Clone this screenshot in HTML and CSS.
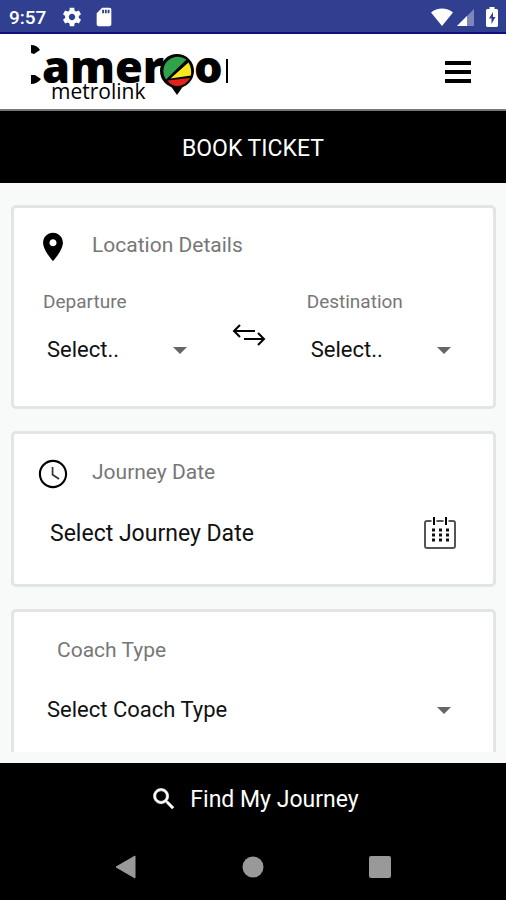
FILE: index.html
```html
<!DOCTYPE html>
<html lang="en">
<head>
    <meta charset="UTF-8">
    <meta name="viewport" content="width=device-width, initial-scale=1.0">
    <title>Book Ticket</title>
    <link rel="stylesheet" href="styles.css">
</head>
<body>
    <div class="app">
        <div class="status-bar">
            <div class="status-group">
                <span class="clock">9:57</span>
                <svg width="22" height="22" viewBox="0 0 24 24" fill="#fff"><path d="M19.43 12.98c.04-.32.07-.64.07-.98s-.03-.66-.07-.98l2.11-1.65c.19-.15.24-.42.12-.64l-2-3.46c-.12-.22-.39-.3-.61-.22l-2.49 1c-.52-.4-1.08-.73-1.69-.98l-.38-2.65C14.46 2.18 14.25 2 14 2h-4c-.25 0-.46.18-.49.42l-.38 2.65c-.61.25-1.17.59-1.69.98l-2.49-1c-.23-.09-.49 0-.61.22l-2 3.46c-.13.22-.07.49.12.64l2.11 1.65c-.04.32-.07.65-.07.98s.03.66.07.98l-2.11 1.65c-.19.15-.24.42-.12.64l2 3.46c.12.22.39.3.61.22l2.49-1c.52.4 1.08.73 1.69.98l.38 2.65c.03.24.24.42.49.42h4c.25 0 .46-.18.49-.42l.38-2.65c.61-.25 1.17-.59 1.69-.98l2.49 1c.23.09.49 0 .61-.22l2-3.46c.12-.22.07-.49-.12-.64l-2.11-1.65zM12 15.500c-1.930 0-3.500-1.570-3.500-3.500s1.570-3.500 3.500-3.500 3.500 1.570 3.500 3.500-1.570 3.500-3.500 3.500z"/></svg>
                <svg width="22" height="22" viewBox="0 0 24 24" fill="#fff"><path d="M18 2h-8L4.020 8 4 20c0 1.100.9 2 2 2h12c1.100 0 2-.9 2-2V4c0-1.100-.9-2-2-2zm-6 6h-2V4h2v4zm3 0h-2V4h2v4zm3 0h-2V4h2v4z"/></svg>
            </div>
            <div class="status-group status-right">
                <svg width="22" height="18" viewBox="0 0 22 18"><path d="M11 18 0 4.500C3 1.800 7 .5 11 .5s8 1.300 11 4z" fill="#fff"/></svg>
                <svg width="17" height="17" viewBox="0 0 17 17"><path d="M17 0v17H0z" fill="#7f86bb"/><path d="M10 7v10H0z" fill="#fff"/></svg>
                <svg class="battery" width="12" height="20" viewBox="0 0 12 20"><path d="M3.500 0h5v2H11l1 1v16l-1 1H1l-1-1V3l1-1h2.500z" fill="#fff"/><path d="M7 5 3 11.500h2.500V17l4-7H7z" fill="#303f8f"/></svg>
            </div>
        </div>

        <header class="header">
            <svg class="logo" width="200" height="64" viewBox="0 0 200 64" role="img" aria-label="Cameroon metrolink">
                <path d="M1 5q6 0 9 5l-6 4-3-1zM1 44v-9l4 0 6 4q-4 5-10 5z"/>
                <text class="logo-name" x="12" y="43">amer</text>
                <text class="logo-name" x="164" y="43">o</text>
                <path d="M197 19v24" stroke="#000" stroke-width="2"/>
                <path d="m140 45 7 10 7-10z"/>
                <circle cx="147" cy="31" r="17"/>
                <path d="M136 39.500a14.500 14.500 0 0 1 20.500-20z" fill="#31a24c"/>
                <path d="M140.500 38.500 158.500 22.500q3.500 6 2.500 13z" fill="#f8e71c"/>
                <path d="M137.500 40.500l22.500-2.500q-4 7.500-12 8-7 0-10.500-5.500z" fill="#e2231a"/>
                <text class="logo-sub" x="21" y="59">metrolink</text>
            </svg>
            <button type="button" class="menu-btn" aria-label="Menu">
                <svg width="28" height="24" viewBox="0 0 28 24"><path d="M1 3h26M1 12h26M1 21h26" stroke="#000" stroke-width="4"/></svg>
            </button>
        </header>

        <h1 class="page-title">BOOK TICKET</h1>

        <main class="content">
            <section class="card location-card">
                <div class="card-head">
                    <svg width="34" height="34" viewBox="0 0 24 24"><path d="M12 2C8.130 2 5 5.130 5 9c0 5.250 7 13 7 13s7-7.750 7-13c0-3.870-3.130-7-7-7zm0 9.500c-1.380 0-2.500-1.120-2.500-2.500s1.120-2.500 2.500-2.500 2.500 1.120 2.500 2.500-1.120 2.500-2.500 2.500z"/></svg>
                    <h2>Location Details</h2>
                </div>
                <div class="route">
                    <div class="field">
                        <label for="departure">Departure</label>
                        <select id="departure" name="departure">
                            <option>Select..</option>
                        </select>
                    </div>
                    <button type="button" class="swap-btn" aria-label="Swap">
                        <svg width="36" height="26" viewBox="0 0 36 26" fill="none" stroke="#000" stroke-width="2"><path d="M24 9H3M9 3 3 9l6 6M13 17h20M27 11l6 6-6 6"/></svg>
                    </button>
                    <div class="field">
                        <label for="destination">Destination</label>
                        <select id="destination" name="destination">
                            <option>Select..</option>
                        </select>
                    </div>
                </div>
            </section>

            <section class="card date-card">
                <div class="card-head">
                    <svg width="34" height="34" viewBox="0 0 24 24"><path d="M11.990 2C6.470 2 2 6.480 2 12s4.470 10 9.990 10C17.520 22 22 17.520 22 12S17.520 2 11.990 2zM12 20.500c-4.700 0-8.500-3.800-8.500-8.500s3.800-8.500 8.500-8.500 8.500 3.800 8.500 8.500-3.800 8.500-8.500 8.500z"/><path d="M11.700 7v5.500l4.600 3" fill="none" stroke="#333" stroke-width="1.200"/></svg>
                    <h2>Journey Date</h2>
                </div>
                <button type="button" class="date-btn">
                    <span>Select Journey Date</span>
                    <svg width="32" height="32" viewBox="0 0 32 32"><rect x="1" y="4" width="30" height="27" rx="2" fill="none" stroke="#555" stroke-width="2"/><path d="M10 0v8M22 0v8" stroke="#fff" stroke-width="5"/><path d="M10 0v8M22 0v8" stroke="#000" stroke-width="2"/><path d="M8 13h3M15 13h3M22 13h3M8 18h3M15 18h3M22 18h3M8 23h3M15 23h3M22 23h3" stroke="#111" stroke-width="3"/></svg>
                </button>
            </section>

            <section class="card coach-card">
                <label for="coach">Coach Type</label>
                <select id="coach" name="coach">
                    <option>Select Coach Type</option>
                </select>
            </section>
        </main>

        <button type="button" class="find-btn">
            <svg width="28" height="28" viewBox="0 0 24 24" fill="#fff" stroke="#fff" stroke-width=".5"><path d="M15.500 14h-.79l-.28-.27C15.410 12.590 16 11.110 16 9.500 16 5.910 13.090 3 9.500 3S3 5.910 3 9.500 5.910 16 9.500 16c1.610 0 3.090-.59 4.230-1.570l.27.28v.79l5 4.990L20.490 19l-4.990-5zm-6 0C7.010 14 5 11.990 5 9.500S7.010 5 9.500 5 14 7.010 14 9.500 11.990 14 9.500 14z"/></svg>
            <span>Find My Journey</span>
        </button>

        <nav class="nav-bar">
            <button type="button" aria-label="Back"><svg width="22" height="24" viewBox="0 0 22 24"><path d="M20 1v22L1 12z" fill="#999" stroke="#999" stroke-linejoin="round"/></svg></button>
            <button type="button" aria-label="Home"><svg width="22" height="24" viewBox="0 0 22 24"><circle cx="11" cy="12" r="10.500" fill="#999"/></svg></button>
            <button type="button" aria-label="Recent apps"><svg width="22" height="24" viewBox="0 0 22 24"><rect y="1" width="22" height="22" rx="2" fill="#999"/></svg></button>
        </nav>
    </div>
</body>
</html>
```
FILE: styles.css
```css
* {
    box-sizing: border-box;
}

body {
    margin: 0;
    font-family: Roboto, sans-serif;
    background-color: #f8f9f9;
    color: #111;
}

svg {
    display: block;
    flex-shrink: 0;
}

button {
    padding: 0;
    border: none;
    background: none;
    font-family: inherit;
    color: inherit;
    cursor: pointer;
}

.app {
    display: flex;
    flex-direction: column;
    height: 100vh;
}

/* status bar */
.status-bar {
    display: flex;
    justify-content: space-between;
    align-items: center;
    height: 34px;
    padding: 2px 8px 0 9px;
    background-color: #303f8f;
    border-bottom: 2px solid #10107a;
    color: #fff;
}

.status-group {
    display: flex;
    align-items: center;
    gap: 10px;
}

.status-right {
    gap: 4px;
}

.battery {
    margin-left: 8px;
}

.clock {
    margin-right: 5px;
    font-size: 19px;
    font-weight: 500;
}

/* header */
.header {
    display: flex;
    justify-content: space-between;
    align-items: center;
    height: 77px;
    padding: 0 34px 0 30px;
    background-color: #fff;
    border-bottom: 2px solid #777;
}

.logo {
    overflow: visible;
}

.logo-name {
    font-family: "Open Sans", sans-serif;
    font-size: 45px;
    font-weight: 800;
}

.logo-sub {
    font-family: "Open Sans", sans-serif;
    font-size: 21px;
}

.page-title {
    margin: 0;
    padding-top: 4px;
    background-color: #000;
    color: #fff;
    font-size: 23px;
    font-weight: 400;
    line-height: 68px;
    text-align: center;
}

/* cards */
.content {
    flex: 1;
    min-height: 0;
    display: flex;
    flex-direction: column;
    gap: 22px;
    margin-bottom: 11px;
    padding: 22px 10px 0 11px;
    overflow: hidden;
}

.card {
    flex-shrink: 0;
    background-color: #fff;
    border: 3px solid #e2e5e5;
    border-radius: 5px;
}

.card-head {
    display: flex;
    align-items: center;
    gap: 22px;
}

.card-head h2,
label {
    margin: 0;
    color: #777;
    font-size: 21px;
    font-weight: 400;
    line-height: 28px;
}

.card-head h2 {
    padding-bottom: 4px;
}

.location-card {
    padding: 22px 38px 40px 22px;
}

.route {
    display: flex;
    justify-content: space-between;
    align-items: center;
    margin-top: 24px;
    padding-left: 7px;
}

.field {
    width: 36%;
}

.field label {
    font-size: 19px;
}

.swap-btn {
    margin-top: 16px;
}

select {
    display: block;
    width: 100%;
    padding: 0 24px 0 4px;
    border: none;
    background: url("data:image/svg+xml;charset=UTF-8,%3csvg xmlns='http://www.w3.org/2000/svg' viewBox='0 0 14 7'%3e%3cpath d='M0 0h14L7 7z' fill='%23666'/%3e%3c/svg%3e") no-repeat right 4px center;
    background-size: 14px 7px;
    appearance: none;
    color: inherit;
    font-family: inherit;
    font-size: 22px;
    line-height: 32px;
    cursor: pointer;
}

.field select {
    margin-top: 18px;
}

.date-card {
    padding: 23px 37px 35px 22px;
}

.date-btn {
    display: flex;
    justify-content: space-between;
    align-items: center;
    width: 100%;
    margin-top: 26px;
    padding-left: 14px;
    font-size: 23px;
}

.coach-card {
    padding: 24px 38px 40px 29px;
}

.coach-card label {
    padding-left: 14px;
}

.coach-card select {
    margin-top: 30px;
}

/* bottom */
.find-btn {
    display: flex;
    justify-content: center;
    align-items: center;
    gap: 12px;
    height: 72px;
    padding-left: 3px;
    background-color: #000;
    color: #fff;
    font-size: 23px;
}

.nav-bar {
    display: flex;
    justify-content: space-evenly;
    align-items: center;
    height: 65px;
    padding: 0 10px 2px;
    background-color: #000;
}
```
